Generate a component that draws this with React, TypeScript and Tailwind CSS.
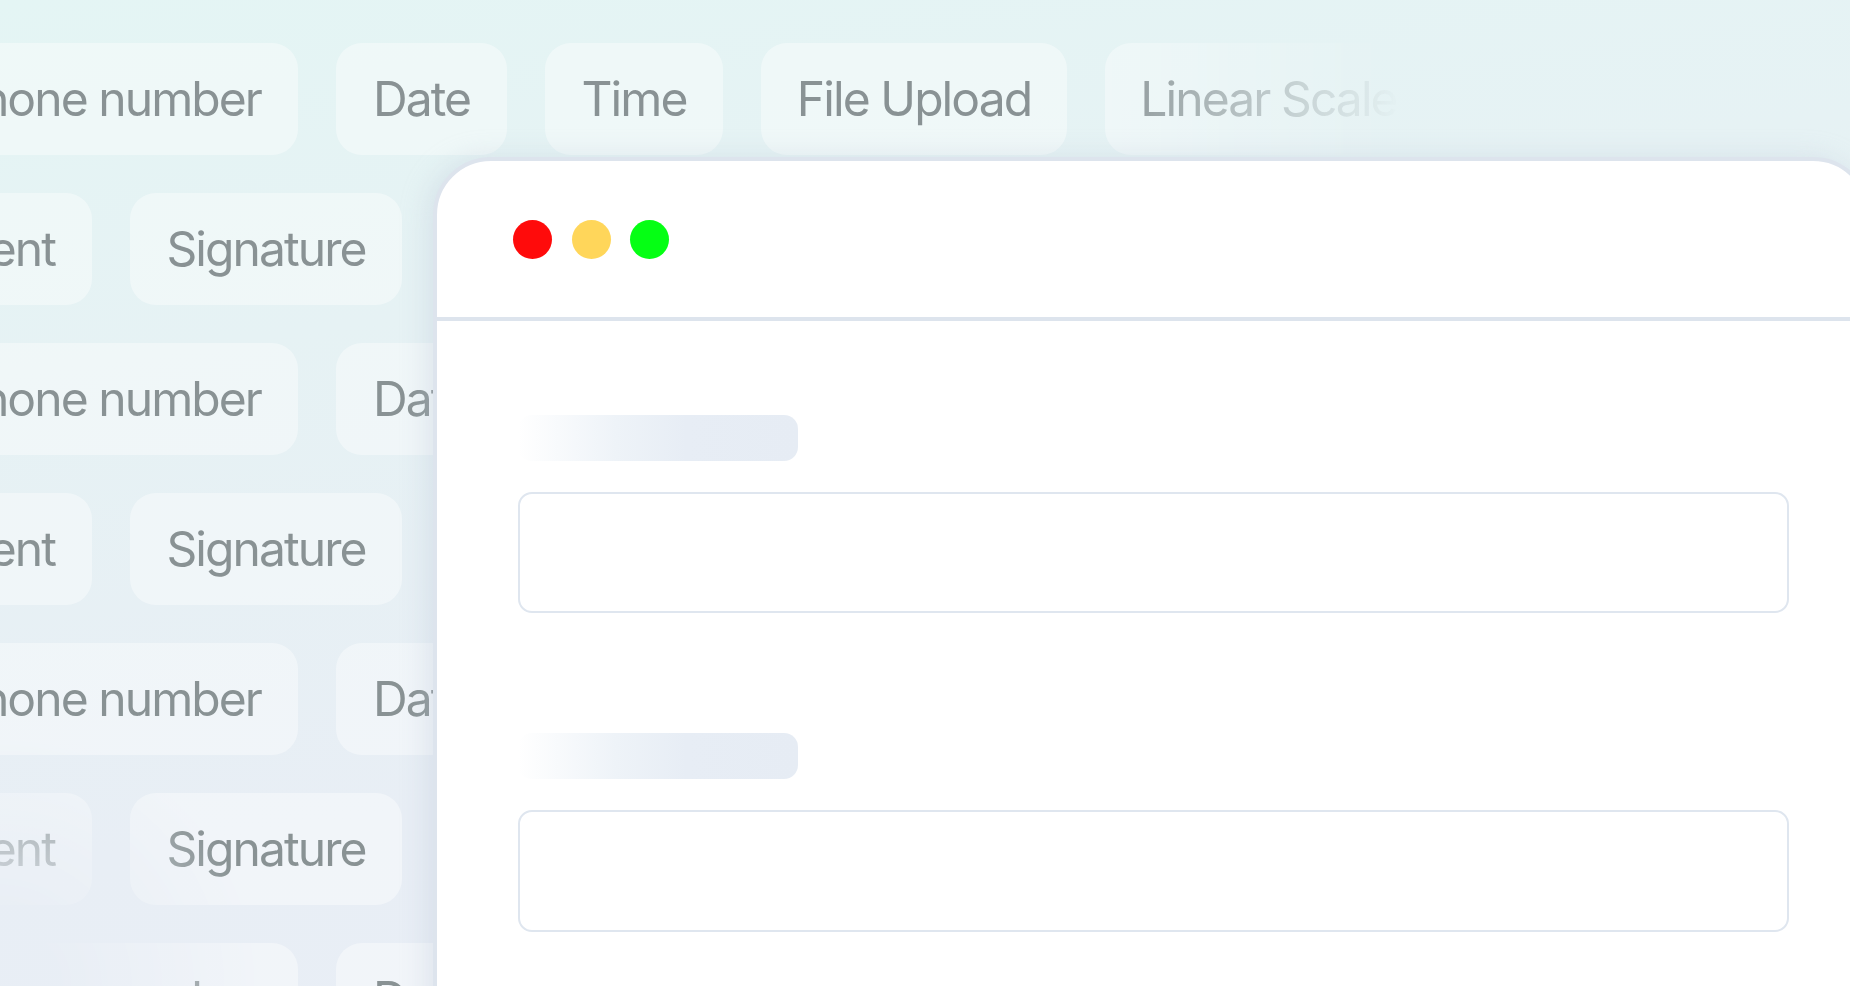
import React from "react";

type Pill = { t: string; w: number; end?: boolean };

const rowA: Pill[] = [
  { t: "Phone number", w: 366, end: true },
  { t: "Date", w: 171 },
  { t: "Time", w: 178 },
  { t: "File Upload", w: 306 },
  { t: "Linear Scale", w: 327 },
  { t: "Checkbox", w: 262 },
];

const rowB: Pill[] = [
  { t: "Payment", w: 251, end: true },
  { t: "Signature", w: 272 },
  { t: "Address", w: 246 },
  { t: "Email", w: 190 },
  { t: "Rating", w: 210 },
  { t: "Dropdown", w: 270 },
];

function PillRow({ items, offset }: { items: Pill[]; offset: "a" | "b" }) {
  return (
    <div
      className={
        "flex h-[112px] shrink-0 gap-[38px] " +
        (offset === "a" ? "ml-[-68px]" : "ml-[-159px]")
      }
    >
      {items.map((p, i) => (
        <div
          key={i}
          style={{ width: p.w }}
          className={
            "flex h-[112px] shrink-0 items-center rounded-[26px] bg-white/40 text-[48px] leading-none tracking-[-0.04em] text-[#899294] whitespace-nowrap " +
            (p.end ? "justify-end pr-[37px]" : "justify-center")
          }
        >
          {p.t}
        </div>
      ))}
    </div>
  );
}

export default function App() {
  const rows = [0, 1, 2, 3, 4, 5, 6];
  return (
    <div className="relative h-[986px] w-full overflow-hidden bg-[linear-gradient(172deg,#e4f5f4_0%,#e6f2f4_30%,#e8eef5_70%,#e9eef6_100%)] font-[Inter,'Noto_Sans',sans-serif]">
      <div className="h-full w-full [mask-image:linear-gradient(to_right,black_1090px,transparent_1400px)] [-webkit-mask-image:linear-gradient(to_right,black_1090px,transparent_1400px)]">
        <div className="flex h-full w-full flex-col gap-[38px] pt-[43px] [mask-image:radial-gradient(circle_at_0%_100%,transparent_40px,black_260px)] [-webkit-mask-image:radial-gradient(circle_at_0%_100%,transparent_40px,black_260px)]">
          {rows.map((r) => (
            <PillRow key={r} items={r % 2 === 0 ? rowA : rowB} offset={r % 2 === 0 ? "a" : "b"} />
          ))}
        </div>
      </div>

      {/* Window overlay */}
      <div className="absolute left-[433px] top-[157px] h-[900px] w-[1438px] rounded-t-[58px] border-[4px] border-[#dde4ed] bg-white shadow-[-6px_0_26px_rgba(186,198,214,0.35)]">
        <div className="box-content flex h-[156px] items-center gap-[19.5px] border-b-[4px] border-[#dde4ed] pl-[76px]">
          <div className="h-[39px] w-[39px] rounded-full bg-[#ff0b0b]" />
          <div className="h-[39px] w-[39px] rounded-full bg-[#ffd65a]" />
          <div className="h-[39px] w-[39px] rounded-full bg-[#05ff14]" />
        </div>
        <div className="flex flex-col pl-[81px] pt-[94px]">
          <div className="h-[46px] w-[280px] rounded-[14px] bg-[linear-gradient(to_right,rgba(232,238,246,0)_0%,#eef3f8_35%,#e7edf5_60%,#e6ecf4_100%)]" />
          <div className="mt-[31px] h-[121px] w-[1271px] rounded-[14px] border-2 border-[#dfe6ef] bg-white" />
          <div className="mt-[120px] h-[46px] w-[280px] rounded-[14px] bg-[linear-gradient(to_right,rgba(232,238,246,0)_0%,#eef3f8_35%,#e7edf5_60%,#e6ecf4_100%)]" />
          <div className="mt-[31px] h-[122px] w-[1271px] rounded-[14px] border-2 border-[#dfe6ef] bg-white" />
        </div>
      </div>
    </div>
  );
}
